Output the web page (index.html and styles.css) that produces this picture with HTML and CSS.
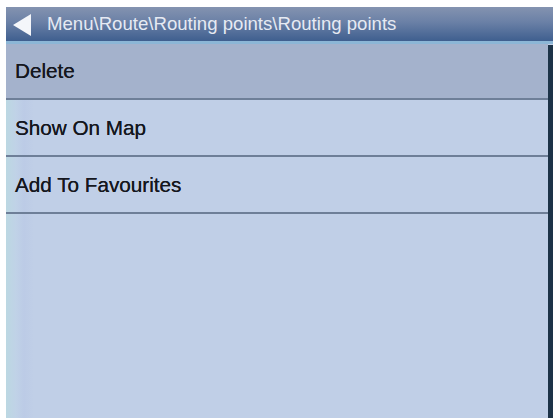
FILE: index.html
```html
<!DOCTYPE html>
<html>
<head>
<meta charset="utf-8">
<link rel="stylesheet" href="styles.css">
</head>
<body>
<div class="screen">
  <div class="header">
    <svg class="back" width="20" height="24" viewBox="0 0 20 24"><polygon points="0,12 18,1 18,23" fill="#f4f6fa"/></svg>
    <span class="title">Menu\Route\Routing points\Routing points</span>
  </div>
  <div class="content">
    <div class="list">
      <div class="item selected">Delete</div>
      <div class="item">Show On Map</div>
      <div class="item">Add To Favourites</div>
    </div>
    <div class="scrollbar"></div>
  </div>
</div>
</body>
</html>
```

FILE: styles.css
```css
html, body {
  margin: 0;
  padding: 0;
  background: #ffffff;
}
body {
  width: 557px;
  height: 420px;
  overflow: hidden;
  font-family: "Liberation Sans", Arial, sans-serif;
}
.screen {
  margin: 7px 4px 0 6px;
  height: 411px;
  display: flex;
  flex-direction: column;
  background: #c0cfe7;
}
.header {
  height: 34px;
  display: flex;
  align-items: center;
  gap: 14px;
  padding-left: 7px;
  background: linear-gradient(to bottom, #8493b0 0%, #6a80a6 45%, #3f5f8f 100%);
  border-bottom: 3px solid #8cb6d6;
}
.back {
  flex: none;
  margin-top: 1px;
}
.title {
  color: #e6eaf3;
  font-size: 18.6px;
}
.content {
  flex: 1;
  display: flex;
  background: linear-gradient(to right, #bcd8e2 0px, #c0d2e7 10px, #bccbe6 18px, #c0cfe7 28px);
}
.list {
  flex: 1;
  display: flex;
  flex-direction: column;
}
.item {
  height: 55px;
  display: flex;
  align-items: center;
  padding-left: 9px;
  font-size: 20.7px;
  color: #15171e;
  text-shadow: 0 0 0.6px #15171e;
  border-bottom: 2px solid #6e7f98;
}
.item.selected {
  background: #a4b2cc;
  height: 54px;
}
.scrollbar {
  width: 5px;
  flex: none;
  margin-top: 1px;
  background: #1c3348;
}
```
